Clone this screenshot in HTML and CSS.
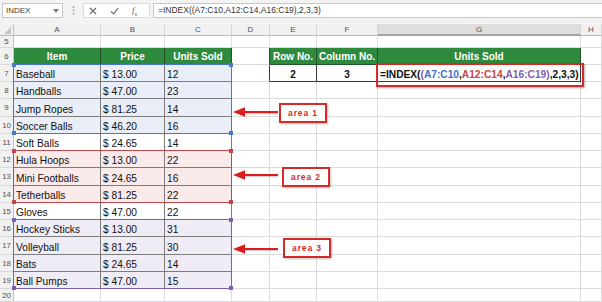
FILE: index.html
```html
<!DOCTYPE html>
<html>
<head>
<meta charset="utf-8">
<link rel="stylesheet" href="styles.css">
</head>
<body>
<div class="toolbar">
  <div class="namebox"><span>INDEX</span><svg class="caret" width="6" height="4" viewBox="0 0 6 4"><path d="M0 0h6L3 4z"/></svg></div>
  <div class="grip"><svg width="3" height="9" viewBox="0 0 3 9"><circle cx="1.5" cy="1.2" r="0.9"/><circle cx="1.5" cy="4.5" r="0.9"/><circle cx="1.5" cy="7.8" r="0.9"/></svg></div>
  <div class="fbtns">
    <svg class="ico" width="8" height="8" viewBox="0 0 8 8"><path d="M1 1l6 6M7 1l-6 6"/></svg>
    <svg class="ico" width="9" height="8" viewBox="0 0 9 8"><path d="M1 4.3l2.6 2.6L8.2 1.2"/></svg>
    <span class="fx">f<sub>x</sub></span>
  </div>
  <div class="finput">=INDEX((A7:C10,A12:C14,A16:C19),2,3,3)</div>
</div>

<div class="sheet">
  <div class="ch corner"><svg width="7" height="7" viewBox="0 0 7 7"><path d="M7 0v7H0z"/></svg></div>
  <div class="ch">A</div><div class="ch">B</div><div class="ch">C</div><div class="ch">D</div><div class="ch">E</div><div class="ch">F</div><div class="ch sel">G</div><div class="ch">H</div>

  <div class="rh">5</div><div class="c"></div><div class="c"></div><div class="c"></div><div class="c"></div><div class="c"></div><div class="c"></div><div class="c"></div><div class="c"></div>

  <div class="rh">6</div><div class="g">Item</div><div class="g">Price</div><div class="g">Units Sold</div><div class="c edge"></div><div class="g">Row No.</div><div class="g">Column No.</div><div class="g">Units Sold</div><div class="c"></div>

  <div class="rh">7</div><div class="d b1">Baseball</div><div class="d b1">$ 13.00</div><div class="d b1">12</div><div class="c edge"></div><div class="e">2</div><div class="e">3</div><div class="e fm">=INDEX(<span class="pp">(</span><span class="r1">A7:C10</span>,<span class="r2">A12:C14</span>,<span class="r3">A16:C19</span><span class="pp">)</span>,2,3,3)</div><div class="c"></div>

  <div class="rh">8</div><div class="d b1">Handballs</div><div class="d b1">$ 47.00</div><div class="d b1">23</div><div class="c"></div><div class="c"></div><div class="c"></div><div class="c"></div><div class="c"></div>
  <div class="rh">9</div><div class="d b1">Jump Ropes</div><div class="d b1">$ 81.25</div><div class="d b1">14</div><div class="c"></div><div class="c"></div><div class="c"></div><div class="c"></div><div class="c"></div>
  <div class="rh">10</div><div class="d b1">Soccer Balls</div><div class="d b1">$ 46.20</div><div class="d b1">16</div><div class="c"></div><div class="c"></div><div class="c"></div><div class="c"></div><div class="c"></div>
  <div class="rh">11</div><div class="d">Soft Balls</div><div class="d">$ 24.65</div><div class="d">14</div><div class="c"></div><div class="c"></div><div class="c"></div><div class="c"></div><div class="c"></div>
  <div class="rh">12</div><div class="d b2">Hula Hoops</div><div class="d b2">$ 13.00</div><div class="d b2">22</div><div class="c"></div><div class="c"></div><div class="c"></div><div class="c"></div><div class="c"></div>
  <div class="rh">13</div><div class="d b2">Mini Footballs</div><div class="d b2">$ 24.65</div><div class="d b2">16</div><div class="c"></div><div class="c"></div><div class="c"></div><div class="c"></div><div class="c"></div>
  <div class="rh">14</div><div class="d b2">Tetherballs</div><div class="d b2">$ 81.25</div><div class="d b2">22</div><div class="c"></div><div class="c"></div><div class="c"></div><div class="c"></div><div class="c"></div>
  <div class="rh">15</div><div class="d">Gloves</div><div class="d">$ 47.00</div><div class="d">22</div><div class="c"></div><div class="c"></div><div class="c"></div><div class="c"></div><div class="c"></div>
  <div class="rh">16</div><div class="d b3">Hockey Sticks</div><div class="d b3">$ 13.00</div><div class="d b3">31</div><div class="c"></div><div class="c"></div><div class="c"></div><div class="c"></div><div class="c"></div>
  <div class="rh">17</div><div class="d b3">Volleyball</div><div class="d b3">$ 81.25</div><div class="d b3">30</div><div class="c"></div><div class="c"></div><div class="c"></div><div class="c"></div><div class="c"></div>
  <div class="rh">18</div><div class="d b3">Bats</div><div class="d b3">$ 24.65</div><div class="d b3">14</div><div class="c"></div><div class="c"></div><div class="c"></div><div class="c"></div><div class="c"></div>
  <div class="rh">19</div><div class="d b3">Ball Pumps</div><div class="d b3">$ 47.00</div><div class="d b3">15</div><div class="c"></div><div class="c"></div><div class="c"></div><div class="c"></div><div class="c"></div>
  <div class="rh">20</div><div class="c"></div><div class="c"></div><div class="c"></div><div class="c"></div><div class="c"></div><div class="c"></div><div class="c"></div><div class="c"></div>

  <div class="range area1"><i class="k tl"></i><i class="k tr"></i><i class="k bl"></i><i class="k br"></i></div>
  <div class="range area2"><i class="k tl"></i><i class="k tr"></i><i class="k bl"></i><i class="k br"></i></div>
  <div class="range area3"><i class="k tl"></i><i class="k tr"></i><i class="k bl"></i><i class="k br"></i></div>

  <div class="hl"></div>

  <svg class="arrow a1" width="46" height="12" viewBox="0 0 46 12"><path class="sh" d="M12 7.5H45"/><path d="M11 6H45"/><path class="hd" d="M0 6L12 1.2V10.8z"/></svg>
  <svg class="arrow a2" width="46" height="12" viewBox="0 0 46 12"><path class="sh" d="M12 7.5H45"/><path d="M11 6H45"/><path class="hd" d="M0 6L12 1.2V10.8z"/></svg>
  <svg class="arrow a3" width="46" height="12" viewBox="0 0 46 12"><path class="sh" d="M12 7.5H45"/><path d="M11 6H45"/><path class="hd" d="M0 6L12 1.2V10.8z"/></svg>

  <div class="tag t1">area 1</div>
  <div class="tag t2">area 2</div>
  <div class="tag t3">area 3</div>
</div>
</body>
</html>
```

FILE: styles.css
```css
* { box-sizing: border-box; }

body {
  margin: 0;
  width: 602px;
  height: 302px;
  overflow: hidden;
  background: #fff;
  font-family: "Liberation Sans", Arial, sans-serif;
}

/* formula bar */
.toolbar {
  height: 24px;
  background: #f3f3f3;
  display: flex;
  align-items: flex-start;
  padding: 3px 0 0 2px;
}
.namebox {
  width: 61px;
  height: 15px;
  background: #fff;
  border: 1px solid #c8c8c8;
  display: flex;
  align-items: center;
  justify-content: space-between;
  padding: 0 3px 0 3px;
  font-size: 8px;
  color: #3c3c3c;
}
.caret { fill: #7a7a7a; }
.grip {
  width: 20px;
  height: 15px;
  display: flex;
  align-items: center;
  justify-content: center;
  fill: #a0a0a0;
}
.fbtns {
  width: 67px;
  height: 15px;
  background: #fff;
  border: 1px solid #dcdcdc;
  display: flex;
  align-items: center;
  gap: 13px;
  padding-left: 5px;
}
.ico { fill: none; stroke: #6a6a6a; stroke-width: 1.1; }
.fx {
  font-family: "Liberation Serif", serif;
  font-style: italic;
  font-size: 9px;
  color: #555;
}
.fx sub { font-size: 6px; }
.finput {
  flex: 1;
  height: 15px;
  margin-left: 3px;
  background: #fff;
  border: 1px solid #c8c8c8;
  border-right: none;
  padding-left: 4px;
  font-size: 8.5px;
  line-height: 13px;
  color: #333;
  white-space: nowrap;
}

/* sheet grid */
.sheet {
  position: relative;
  display: grid;
  grid-template-columns: 14px 87px 64px 67px 38px 47px 61px 203px 21px;
  grid-template-rows: 12px 12px 17px 17px 17px 18px 17px 17px 17px 18px 17px 17px 17px 18px 17px 17px 13px;
}

.ch, .rh {
  background: #f1f1f1;
  font-size: 8px;
  color: #505050;
  display: flex;
  align-items: center;
  justify-content: center;
}
.ch {
  border-right: 1px solid #d6d6d6;
  border-bottom: 1px solid #b9b9b9;
}
.ch.sel {
  background: #dedede;
  border-bottom: 2px solid #a4a4a4;
}
.corner {
  justify-content: flex-end;
  align-items: flex-end;
  padding: 0 2px 1px 0;
  fill: #c4c4c4;
  border-right: 1px solid #c4c4c4;
}
.corner svg { display: block; }
.rh {
  border-right: 1px solid #c4c4c4;
  border-bottom: 1px solid #d8d8d8;
  font-size: 7.8px;
}

.c {
  border-right: 1px solid #dcdcdc;
  border-bottom: 1px solid #dcdcdc;
}
.c.edge { border-right-color: #3a3a3a; }

.g {
  background: #2e8a3c;
  color: #fff;
  font-weight: bold;
  font-size: 10px;
  display: flex;
  align-items: center;
  justify-content: center;
  white-space: nowrap;
  border-right: 1px solid #21542a;
  border-bottom: 1px solid #21542a;
}

.d {
  border-right: 1px solid #7c7c7c;
  border-bottom: 1px solid #7c7c7c;
  font-size: 10.2px;
  line-height: 12px;
  color: #111;
  display: flex;
  align-items: flex-end;
  padding-left: 2px;
  white-space: nowrap;
}
.b1 { background: #e9eef8; }
.b2 { background: #fbeaea; }
.b3 { background: #efecf6; }

.e {
  border-right: 1px solid #3a3a3a;
  border-bottom: 1px solid #3a3a3a;
  font-size: 10px;
  line-height: 12px;
  font-weight: bold;
  color: #111;
  display: flex;
  align-items: flex-end;
  justify-content: center;
  white-space: nowrap;
}
.e.fm {
  justify-content: flex-start;
  padding-left: 2px;
  font-size: 10.2px;
}
.r1 { color: #3f6ec4; }
.r2 { color: #c8443e; }
.r3 { color: #7f5fae; }
.pp { color: #8a5aa6; }

/* reference outlines over the table */
.range {
  position: absolute;
  left: 13px;
  width: 219px;
  border: 1px solid;
}
.area1 { top: 40px; height: 70px; color: #4a78c8; }
.area2 { top: 126px; height: 53px; color: #c2474a; }
.area3 { top: 195px; height: 70px; color: #7c5fb0; }
.k {
  position: absolute;
  width: 4px;
  height: 4px;
  background: currentColor;
}
.tl { left: -2px; top: -2px; }
.tr { right: -2px; top: -2px; }
.bl { left: -2px; bottom: -2px; }
.br { right: -2px; bottom: -2px; }

.hl {
  position: absolute;
  left: 376px;
  top: 39px;
  width: 208px;
  height: 24px;
  border: 2px solid #d42a2a;
  box-shadow: 1px 1px 2px rgba(0, 0, 0, 0.3);
}

.arrow {
  position: absolute;
  left: 233px;
  fill: none;
  stroke: #e01b1b;
  stroke-width: 2.2;
}
.arrow .sh { stroke: rgba(0, 0, 0, 0.18); stroke-width: 1.5; }
.arrow .hd { fill: #e01b1b; stroke: none; }
.a1 { top: 82px; }
.a2 { top: 145px; }
.a3 { top: 219px; }

.tag {
  position: absolute;
  width: 48px;
  height: 20px;
  border: 2px solid #d42a2a;
  background: #fff;
  color: #d42a2a;
  font-weight: bold;
  font-size: 8.5px;
  letter-spacing: 0.9px;
  display: flex;
  align-items: center;
  justify-content: center;
  box-shadow: 1px 1px 2px rgba(0, 0, 0, 0.25);
}
.t1 { left: 279px; top: 79px; }
.t2 { left: 282px; top: 143px; }
.t3 { left: 283px; top: 214px; }
```
